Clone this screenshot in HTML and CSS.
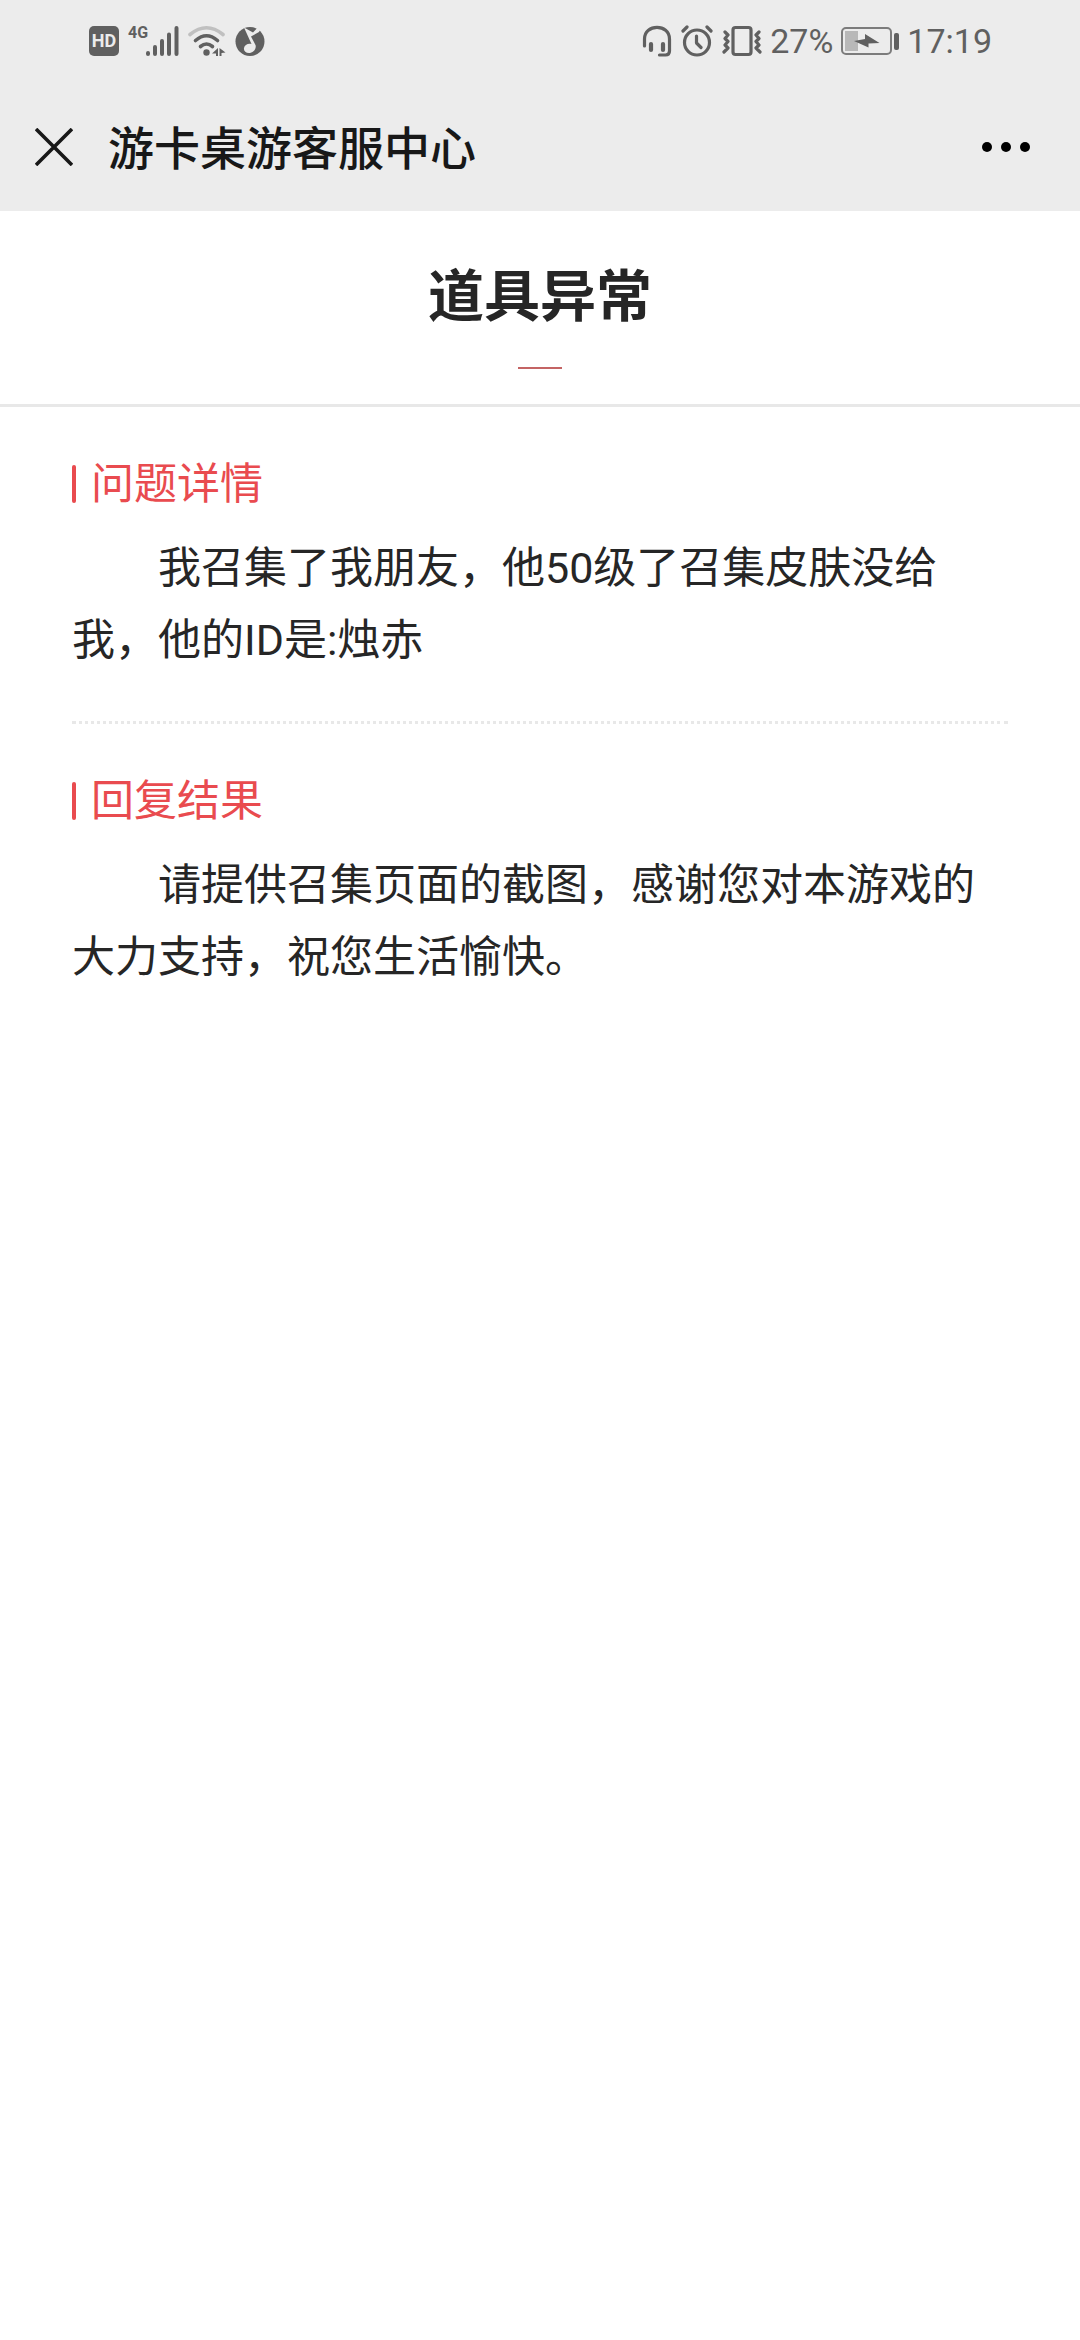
FILE: index.html
```html
<!DOCTYPE html>
<html lang="zh-CN">
<head>
<meta charset="utf-8">
<meta name="viewport" content="width=device-width">
<title>游卡桌游客服中心</title>
<link rel="stylesheet" href="styles.css">
</head>
<body>
<header class="top">
  <div class="status">
    <div class="status-group status-left">
      <span class="hd">HD</span>
      <div class="cell">
        <span class="net">4G</span>
        <svg width="33" height="32" viewBox="0 0 33 32" fill="none" stroke="#606060" stroke-width="4" stroke-linecap="round" aria-hidden="true"><path d="M2 28v1M9 22v7M16 16v13M23 9.500v19.500M30.500 3v26"/></svg>
      </div>
      <svg width="38" height="32" viewBox="0 0 38 32" fill="none" stroke="#606060" stroke-width="3.600" stroke-linecap="round" aria-hidden="true"><path stroke="#c0c0c0" d="M2 9.500Q18.500-4 35 9.500"/><path d="M7.500 15.500Q18.500 6 29.500 15.500M12.500 21.500Q18.500 16.500 24.500 21.500"/><circle cx="18.500" cy="27.500" r="3.200" fill="#606060" stroke="none"/><path fill="#606060" stroke="none" d="M30 23v8h-2v-2.500h-4zM31.500 23l6 4.500-4 .5v3h-2z"/></svg>
      <svg width="30" height="32" viewBox="0 0 30 32" aria-hidden="true"><circle cx="15" cy="16.500" r="14.500" fill="#606060"/><path fill="#ececec" d="M9 2.500l9 5L24 1l2 2-2 4-8 4.500 4.500 8.500c1 3-1 7-5.500 8-4 .5-6.500-2-6-5 .5-3 4-5 7.500-4z"/></svg>
    </div>
    <div class="status-group status-right">
      <div class="status-group status-right-icons">
        <svg width="30" height="32" viewBox="0 0 30 32" fill="none" stroke="#606060" stroke-width="3.200" stroke-linecap="round" aria-hidden="true"><path d="M2.500 21v-7C2.500-1.500 27.500-1.500 27.500 14v12c0 3-1.500 4-4 4h-6"/><path stroke-width="4.200" d="M9 19v6M21 19v6"/></svg>
        <svg width="32" height="32" viewBox="0 0 32 32" fill="none" stroke="#606060" stroke-width="3.200" stroke-linecap="round" stroke-linejoin="round" aria-hidden="true"><circle cx="16" cy="17.500" r="12.500"/><path d="M15.500 11v7l4.500 4.500M2 6l4-4M30 6l-4-4"/></svg>
        <svg width="40" height="32" viewBox="0 0 40 32" fill="none" stroke="#606060" stroke-width="3.200" stroke-linecap="round" stroke-linejoin="round" aria-hidden="true"><rect x="11" y="2.500" width="18" height="27" rx="2.500"/><path d="M3 7l3 3-3 3.500 3 3-3 3.500 3 3-4 4M37 7l-3 3 3 3.500-3 3 3 3.500-3 3 4 4"/></svg>
      </div>
      <span class="status-text">27%</span>
      <svg class="battery" width="58" height="28" viewBox="0 0 58 28" aria-hidden="true"><rect x="1" y="1" width="49" height="26" rx="4" fill="none" stroke="#7c7c7c" stroke-width="2"/><rect x="4" y="4" width="13" height="20" fill="#b8b8b8"/><path fill="#606060" d="M13 14l11-2v-5l14.500 9-11 .500v4z"/><rect x="53" y="6" width="5" height="17" rx="2" fill="#606060"/></svg>
      <time class="status-text">17:19</time>
    </div>
  </div>
  <nav class="nav">
    <button class="icon-button" type="button" aria-label="关闭"><svg width="38" height="38" viewBox="0 0 38 38" fill="none" stroke="#181818" stroke-width="3.600"><path d="M1 1l36 36M37 1L1 37"/></svg></button>
    <span class="nav-title">游卡桌游客服中心</span>
    <button class="icon-button" type="button" aria-label="更多"><svg width="48" height="10" viewBox="0 0 48 10"><circle cx="5" cy="5" r="5"/><circle cx="24" cy="5" r="5"/><circle cx="43" cy="5" r="5"/></svg></button>
  </nav>
</header>
<main>
  <div class="headline"><h1>道具异常</h1></div>
  <section class="block">
    <h2>问题详情</h2>
    <p>我召集了我朋友，他50级了召集皮肤没给我，他的ID是:烛赤</p>
  </section>
  <section class="block">
    <h2>回复结果</h2>
    <p>请提供召集页面的截图，感谢您对本游戏的大力支持，祝您生活愉快。</p>
  </section>
</main>
</body>
</html>
```
FILE: styles.css
```css
* { box-sizing: border-box; }
body {
  margin: 0;
  background: #fff;
  color: #262626;
  font-family: Roboto, "Noto Sans CJK SC", sans-serif;
}
h1, h2, p { margin: 0; }
svg { display: block; }

.top { background: #ececec; }
.status {
  display: flex;
  justify-content: space-between;
  align-items: center;
  height: 82px;
  padding: 0 88px 0 89px;
  color: #606060;
}
.status-group { display: flex; align-items: center; }
.status-left { gap: 9px; }
.status-right { gap: 8px; }
.status-right-icons { gap: 9px; }
.cell { display: flex; align-items: flex-start; }
.hd {
  width: 30px;
  border-radius: 5px;
  background: #606060;
  color: #ececec;
  font-size: 18px;
  font-weight: 700;
  line-height: 30px;
  text-align: center;
}
.net {
  font: 700 16px/16px Roboto, sans-serif;
  width: 18px;
}
.status-text { font-size: 34px; line-height: 40px; }

.nav {
  display: flex;
  align-items: center;
  height: 129px;
  padding: 0 50px 0 35px;
}
.icon-button {
  padding: 0;
  border: 0;
  background: none;
}
.nav-title {
  flex: 1;
  margin-left: 35px;
  padding-top: 4px;
  color: #181818;
  font-size: 46px;
  font-weight: 500;
  line-height: 64px;
}

.headline {
  padding: 44px 72px 35px;
  border-bottom: 3px solid #e8e8e8;
  text-align: center;
}
h1 {
  font-size: 56px;
  font-weight: 700;
  line-height: 84px;
}
.headline::after {
  content: "";
  display: block;
  width: 44px;
  height: 2px;
  margin: 28px auto 0;
  background: #c46464;
}

.block {
  margin: 0 72px;
  padding: 41px 0 45px;
}
.block + .block { border-top: 3px dotted #e8e8e8; }
h2 {
  display: flex;
  align-items: center;
  gap: 15px;
  margin-bottom: 12px;
  color: #e94b4f;
  font-size: 43px;
  font-weight: 400;
  line-height: 72px;
}
h2::before {
  content: "";
  width: 4px;
  height: 38px;
  border-radius: 2px;
  background: #e94b4f;
}
p {
  font-size: 43px;
  line-height: 72px;
  text-indent: 2em;
}
```
